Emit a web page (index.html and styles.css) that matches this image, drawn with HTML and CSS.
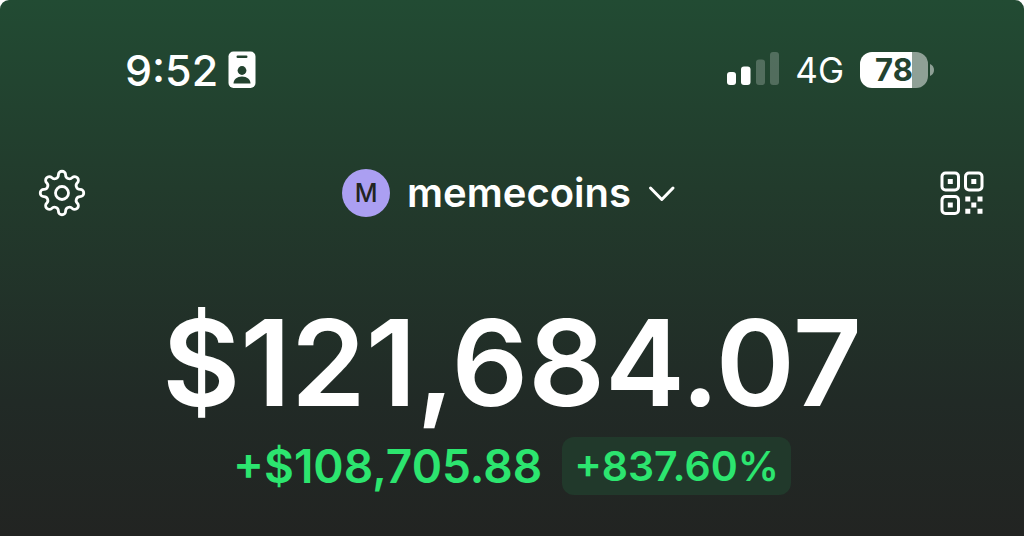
FILE: index.html
```html
<!DOCTYPE html>
<html lang="en">
<head>
<meta charset="utf-8">
<meta name="viewport" content="width=device-width, initial-scale=1">
<title>memecoins</title>
<link rel="stylesheet" href="styles.css">
</head>
<body>
<main class="wallet">
  <div class="status">
    <div class="status-left">
      <time class="clock">9:52</time>
      <svg class="badge" viewBox="0 0 28 38" width="28" height="38" aria-hidden="true">
        <rect x="0.5" y="0.5" width="27" height="36.500" rx="5" fill="#fff"/>
        <rect x="8.500" y="4.500" width="11" height="2.500" rx="1.200" fill="#23432f"/>
        <circle cx="14" cy="19.500" r="4.400" fill="#23432f"/>
        <path d="M5.500 32.500c0-4 3.500-7 8.500-7s8.500 3 8.500 7z" fill="#23432f"/>
      </svg>
    </div>
    <div class="status-right">
      <svg class="signal" viewBox="0 0 52 36" width="52" height="36" aria-hidden="true">
        <rect x="0" y="20" width="9" height="13" rx="3" fill="#fff"/>
        <rect x="14" y="14.500" width="9.500" height="18.500" rx="3" fill="#fff"/>
        <rect x="29" y="7.500" width="9" height="25.500" rx="3" fill="#fff" opacity=".22"/>
        <rect x="43" y="0" width="9" height="33" rx="3" fill="#fff" opacity=".22"/>
      </svg>
      <span class="network">4G</span>
      <div class="battery">
        <span class="battery-level">78</span>
        <svg viewBox="0 0 4 12" width="4" height="12" aria-hidden="true"><path d="M0 0c2.500 1 4 3 4 6s-1.500 5-4 6z" fill="#8fa096"/></svg>
      </div>
    </div>
  </div>

  <nav class="nav">
    <button class="icon-button" type="button" aria-label="Settings">
      <svg viewBox="-24 -24 48 48" width="48" height="48" fill="none" stroke="#fff" stroke-width="2.800" stroke-linejoin="round">
        <path d="M-3.600-18.170A3.600 3.600 0 0 1 3.600-18.170A3.870 3.870 0 0 0 10.300-15.390A3.600 3.600 0 0 1 15.390-10.300A3.870 3.870 0 0 0 18.170-3.600A3.600 3.600 0 0 1 18.170 3.600A3.870 3.870 0 0 0 15.390 10.300A3.600 3.600 0 0 1 10.300 15.390A3.870 3.870 0 0 0 3.600 18.170A3.600 3.600 0 0 1-3.600 18.170A3.870 3.870 0 0 0-10.300 15.390A3.600 3.600 0 0 1-15.390 10.300A3.870 3.870 0 0 0-18.170 3.600A3.600 3.600 0 0 1-18.170-3.600A3.870 3.870 0 0 0-15.390-10.300A3.600 3.600 0 0 1-10.300-15.390A3.870 3.870 0 0 0-3.600-18.170Z"/>
        <circle r="6.500"/>
      </svg>
    </button>
    <button class="account" type="button">
      <span class="avatar">M</span>
      <span class="account-name">memecoins</span>
      <svg viewBox="0 0 28 18" width="28" height="18" fill="none" stroke="#fff" stroke-width="3" stroke-linecap="round" stroke-linejoin="round" aria-hidden="true"><path d="M2.500 4L13.800 15.500L25 4"/></svg>
    </button>
    <button class="icon-button" type="button" aria-label="Scan code">
      <svg viewBox="0 0 44 44" width="44" height="44" fill="none">
        <g stroke="#fff" stroke-width="3">
          <rect x="2" y="2" width="16.500" height="17" rx="3.500"/>
          <rect x="25.500" y="2" width="16.500" height="17" rx="3.500"/>
          <rect x="2" y="25.500" width="16.500" height="17" rx="3.500"/>
        </g>
        <path fill="#fff" d="M7.800 8h5v5h-5zM31.300 8h5v5h-5zM7.800 31.500h5v5h-5zM25.300 25.500h5v5h-5zM37.500 25.500h5v5h-5zM31.300 31.500h5v5h-5zM25.300 37.800h5v5h-5zM37.500 37.800h5v5h-5z"/>
      </svg>
    </button>
  </nav>

  <h1 class="balance">$121,684.07</h1>
  <div class="change">
    <span class="change-amount">+$108,705.88</span>
    <span class="change-percent">+837.60%</span>
  </div>
</main>
</body>
</html>
```
FILE: styles.css
```css
* {
  box-sizing: border-box;
}

html {
  background: #fff;
}

body {
  margin: 0;
  font-family: Inter, "Liberation Sans", sans-serif;
  color: #fff;
}

.wallet {
  display: flex;
  flex-direction: column;
  min-height: 100vh;
  padding: 48px 0 40px;
  border-radius: 9px 9px 0 0;
  background: linear-gradient(#224b33 0%, #223b2c 35%, #212a26 75%, #222422 100%);
}

.status {
  display: flex;
  justify-content: space-between;
  align-items: center;
  height: 44px;
  padding: 0 90px 0 125px;
}

.status-left,
.status-right,
.battery,
.account,
.change {
  display: flex;
  align-items: center;
}

.status-left {
  gap: 10px;
}

.status-right {
  gap: 16px;
}

.clock {
  font-size: 43px;
  font-weight: 500;
  line-height: 44px;
}

.network {
  font-size: 35px;
  line-height: 44px;
}

.battery {
  gap: 2px;
}

.battery-level {
  width: 68px;
  height: 36px;
  border-radius: 12px;
  background: linear-gradient(90deg, #fff 77%, #8fa096 77%);
  color: #23432f;
  font-size: 31px;
  font-weight: 700;
  line-height: 36px;
  text-align: center;
}

.nav {
  display: grid;
  grid-template-columns: 1fr auto 1fr;
  align-items: center;
  margin-top: 77px;
  padding: 0 40px 0 38px;
}

button {
  padding: 0;
  border: 0;
  background: none;
  color: inherit;
  font: inherit;
  cursor: pointer;
}

.icon-button {
  display: flex;
  justify-self: start;
}

.icon-button:last-child {
  justify-self: end;
}

.account {
  gap: 17px;
  padding-right: 4px;
}

.avatar {
  width: 48px;
  height: 48px;
  border-radius: 50%;
  background: #ab9ff2;
  color: #222422;
  font-size: 25px;
  font-weight: 500;
  line-height: 48px;
}

.account-name {
  font-size: 40px;
  font-weight: 600;
  line-height: 48px;
}

.balance {
  margin: 86px 0 0;
  font-size: 120px;
  font-weight: 600;
  line-height: 120px;
  text-align: center;
}

.change {
  justify-content: center;
  gap: 20px;
  margin-top: 14px;
  color: #2ce56f;
}

.change-amount {
  font-size: 46px;
  font-weight: 600;
  line-height: 58px;
}

.change-percent {
  padding: 0 12px;
  border-radius: 12px;
  background: #21392b;
  font-size: 41px;
  font-weight: 600;
  line-height: 58px;
}
```
